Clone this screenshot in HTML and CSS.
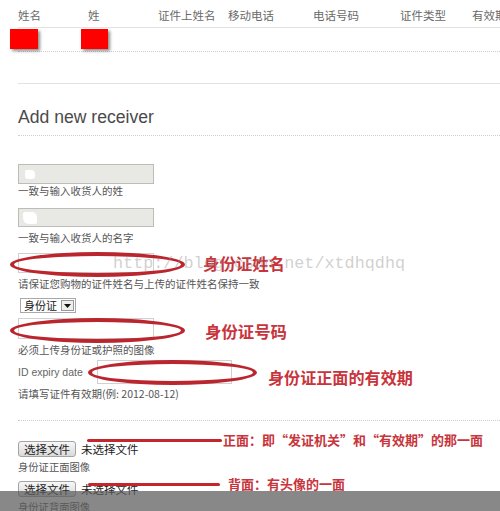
FILE: index.html
```html
<!DOCTYPE html>
<html lang="zh-CN">
<head>
    <meta charset="UTF-8">
    <title>Add new receiver</title>
    <link rel="stylesheet" href="styles.css">
</head>
<body>
    <div class="page">
        <div class="thead">
            <span class="col c1">姓名</span>
            <span class="col c2">姓</span>
            <span class="col c3">证件上姓名</span>
            <span class="col c4">移动电话</span>
            <span class="col c5">电话号码</span>
            <span class="col c6">证件类型</span>
            <span class="col c7">有效期</span>
        </div>
        <div class="trow">
            <span class="col c1"><span class="redact r1"></span></span>
            <span class="col c2"><span class="redact r2"></span></span>
        </div>
        <div class="tspace"></div>

        <h2 class="title">Add new receiver</h2>

        <div class="box grey first"><span class="blot"></span></div>
        <p class="hint">一致与输入收货人的姓</p>
        <div class="box grey second"><span class="blot big"></span></div>
        <p class="hint">一致与输入收货人的名字</p>

        <div class="field-row name-row">
            <div class="box white"></div>
            <span class="ring ring-a"></span>
            <span class="note">身份证姓名</span>
            <span class="watermark">http://blog.csdn.net/xtdhqdhq</span>
        </div>
        <p class="hint tight">请保证您购物的证件姓名与上传的证件姓名保持一致</p>

        <div class="select">
            <span class="select-text">身份证</span>
            <span class="select-arrow"><svg width="7" height="4" viewBox="0 0 7 4"><path d="M0 0h7L3.5 4z" fill="#111"/></svg></span>
        </div>

        <div class="field-row id-row">
            <div class="box white tall"></div>
            <span class="ring ring-b"></span>
            <span class="note">身份证号码</span>
        </div>
        <p class="hint">必须上传身份证或护照的图像</p>

        <div class="field-row expiry-row">
            <label class="expiry-label">ID expiry date</label>
            <div class="box white expiry"></div>
            <span class="ring ring-c"></span>
            <span class="note">身份证正面的有效期</span>
        </div>
        <p class="hint">请填写证件有效期(例: 2012-08-12)</p>

        <div class="divider"></div>

        <div class="file-row">
            <button class="file-btn">选择文件</button>
            <span class="file-name">未选择文件</span>
            <div class="callout front">
                <span class="callout-line"></span>
                <span class="callout-text">正面：即“发证机关”和“有效期”的那一面</span>
            </div>
        </div>
        <p class="hint file-hint">身份证正面图像</p>

        <div class="file-row second-file">
            <button class="file-btn">选择文件</button>
            <span class="file-name">未选择文件</span>
            <div class="callout back">
                <span class="callout-line"></span>
                <span class="callout-text">背面：有头像的一面</span>
            </div>
        </div>
        <p class="hint file-hint">身份证背面图像</p>
    </div>
    <div class="shade"></div>
</body>
</html>
```

FILE: styles.css
```css
body {
    margin: 0;
    background-color: #fff;
    font-family: "Noto Sans CJK SC", "Liberation Sans", sans-serif;
    color: #555;
    overflow: hidden;
}
.page {
    width: 482px;
    padding-left: 18px;
}
.thead {
    display: flex;
    align-items: center;
    height: 24px;
    padding-top: 3px;
    border-bottom: 1px solid #e2e2e2;
    font-size: 11.5px;
    color: #6a6a6a;
    white-space: nowrap;
}
.col {
    display: block;
    flex: none;
}
.c1 { width: 70px; }
.c2 { width: 70px; }
.c3 { width: 70px; }
.c4 { width: 85px; }
.c5 { width: 87px; }
.c6 { width: 72px; }
.trow {
    display: flex;
    height: 23px;
    border-bottom: 1px dotted #cfcfcf;
}
.redact {
    display: block;
    margin-top: 1px;
    height: 20px;
    background-color: #f00;
    box-shadow: 2px 2px 3px rgba(0, 0, 0, 0.45);
}
.r1 {
    width: 28px;
    margin-left: -8px;
}
.r2 {
    width: 27px;
    margin-left: -7px;
}
.tspace {
    height: 31px;
    border-bottom: 1px solid #e2e2e2;
}
.title {
    margin: 22px 0 0;
    padding-bottom: 7px;
    font-family: "Liberation Sans", Arial, sans-serif;
    font-size: 17.6px;
    line-height: 22px;
    font-weight: normal;
    color: #4a4a4a;
    border-bottom: 1px dotted #cfcfcf;
}
.box {
    box-sizing: border-box;
    width: 136px;
    height: 20px;
    border: 1px solid #c4c4c0;
    position: relative;
}
.grey {
    background-color: #e8e8e4;
    border-color: #bdbdb8;
}
.white {
    background-color: #fff;
    border-color: #d0d0d0;
}
.first {
    margin-top: 28px;
}
.second {
    margin-top: 10px;
    height: 19px;
}
.blot {
    position: absolute;
    left: 6px;
    top: 5px;
    width: 10px;
    height: 9px;
    background-color: #fff;
    border-radius: 2px 4px 3px 3px;
}
.blot.big {
    left: 4px;
    top: 3px;
    width: 14px;
    height: 12px;
    border-radius: 2px 5px 2px 6px;
}
.hint {
    margin: 0;
    font-size: 10.5px;
    line-height: 14px;
    color: #555;
    white-space: nowrap;
}
.second + .hint {
    margin-top: 4px;
}
.tight {
    margin-top: 4px;
}
.field-row {
    position: relative;
    display: flex;
    align-items: center;
}
.name-row {
    margin-top: 8px;
    height: 20px;
}
.note {
    font-size: 16.4px;
    line-height: 20px;
    font-weight: bold;
    color: #c8343b;
    white-space: nowrap;
}
.name-row .note {
    margin-left: 49px;
}
.ring {
    position: absolute;
    box-sizing: border-box;
    border: 4px solid #bb252d;
    border-radius: 50%;
}
.ring-a {
    left: -8px;
    top: -1px;
    width: 175px;
    height: 25px;
}
.ring-b {
    left: -8px;
    top: 0;
    width: 175px;
    height: 25px;
}
.ring-c {
    left: 70px;
    top: 0;
    width: 169px;
    height: 25px;
}
.watermark {
    position: absolute;
    left: 95px;
    top: 1px;
    font-family: "Liberation Mono", monospace;
    font-size: 16.8px;
    line-height: 20px;
    color: rgba(150, 150, 150, 0.45);
    white-space: nowrap;
}
.select {
    display: flex;
    align-items: center;
    box-sizing: border-box;
    width: 56px;
    height: 15px;
    margin: 7px 0 0 2px;
    border: 1px solid #a9a9a9;
    background-color: #fff;
}
.select-text {
    flex: 1;
    padding-left: 3px;
    font-size: 11px;
    line-height: 13px;
    color: #222;
}
.select-arrow {
    display: flex;
    align-items: center;
    justify-content: center;
    box-sizing: border-box;
    width: 13px;
    height: 11px;
    margin-right: 1px;
    border: 1px solid #999;
    background-color: #eee;
}
.id-row {
    margin-top: 5px;
    height: 21px;
}
.tall {
    height: 21px;
}
.id-row .note {
    margin: 5px 0 0 51px;
}
.id-row + .hint {
    margin-top: 4px;
}
.expiry-row {
    margin-top: 3px;
    height: 24px;
}
.expiry-label {
    width: 79px;
    font-family: "Liberation Sans", Arial, sans-serif;
    font-size: 10.5px;
    color: #666;
}
.expiry {
    width: 135px;
    height: 24px;
}
.expiry-row .note {
    margin: 9px 0 0 36px;
    font-size: 16.1px;
}
.expiry-row + .hint {
    margin-top: 3px;
}
.divider {
    margin-top: 19px;
    border-top: 1px dotted #cfcfcf;
}
.file-row {
    position: relative;
    display: flex;
    align-items: center;
    margin-top: 20px;
    height: 16px;
}
.second-file {
    margin-top: 7px;
}
.file-btn {
    box-sizing: border-box;
    width: 58px;
    height: 16px;
    padding: 0;
    border: 1px solid #a3a3a3;
    border-radius: 3px;
    background: linear-gradient(#f7f7f7, #dadada);
    font-family: "Noto Sans CJK SC", sans-serif;
    font-size: 11.5px;
    line-height: 14px;
    color: #222;
}
.file-name {
    margin-left: 5px;
    font-size: 11.5px;
    color: #222;
}
.file-hint {
    margin-top: 3px;
    font-size: 10.3px;
}
.callout {
    position: absolute;
    display: flex;
    align-items: center;
    height: 14px;
}
.front {
    left: 69px;
    top: -8px;
}
.back {
    left: 70px;
    top: -4px;
}
.callout-line {
    display: block;
    height: 3px;
    background-color: #c4262e;
    border-radius: 2px;
}
.front .callout-line {
    width: 135px;
    margin-right: 1px;
}
.back .callout-line {
    width: 132px;
    margin-right: 8px;
}
.callout-text {
    font-size: 13px;
    line-height: 14px;
    font-weight: bold;
    color: #c8343b;
    white-space: nowrap;
}
.shade {
    position: fixed;
    left: 0;
    right: 0;
    bottom: 0;
    height: 20px;
    background-color: rgba(90, 90, 90, 0.72);
}
```
